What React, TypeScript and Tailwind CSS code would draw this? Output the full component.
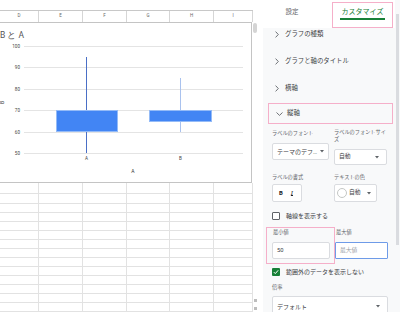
const cols = [
  { w: "w-[39px]", l: "D" },
  { w: "w-[44px]", l: "E" },
  { w: "w-[44px]", l: "F" },
  { w: "w-[43px]", l: "G" },
  { w: "w-[44px]", l: "H" },
  { w: "w-[39px]", l: "I" },
];

const rowHeights = ["h-[11px]", "h-[10px]", ...Array(12).fill("h-[9px]")];

function Chart() {
  const grid = [
    { v: "100", y: 46 },
    { v: "90", y: 67 },
    { v: "80", y: 89 },
    { v: "70", y: 110 },
    { v: "60", y: 132 },
    { v: "50", y: 153 },
  ];
  return (
    <div className="h-[161px] w-[252px] border-t border-r border-b border-[#c4c4c4] bg-white">
      <svg width="251" height="159" className="block overflow-hidden">
        <g transform="translate(0,-23)" fontFamily="Roboto, 'Liberation Sans', sans-serif">
          <text x="0" y="37.5" fontSize="8.5" fill="#555">B と A</text>
          {grid.map((g) => (
            <g key={g.v}>
              <line x1="24" x2="243" y1={g.y + 0.5} y2={g.y + 0.5} stroke="#e4e4e4" strokeWidth="1" />
              <text x="20" y={g.y + 2} fontSize="4.6" fill="#444" textAnchor="end">
                {g.v}
              </text>
            </g>
          ))}
          <text x="3.5" y="102.5" fontSize="5" fill="#333" transform="rotate(-90 3.5 102.5)" textAnchor="middle">
            B
          </text>
          <line x1="86.5" x2="86.5" y1="57" y2="153" stroke="#4a6fc6" strokeWidth="1" />
          <rect x="56.5" y="110.5" width="61" height="21" fill="#4285f4" stroke="#94bbf7" strokeWidth="1" />
          <line x1="180.5" x2="180.5" y1="78" y2="132" stroke="#a9c2ee" strokeWidth="1" />
          <rect x="149.5" y="110.5" width="62" height="11" fill="#4285f4" stroke="#94bbf7" strokeWidth="1" />
          <text x="86.5" y="160" fontSize="4.6" fill="#444" textAnchor="middle">A</text>
          <text x="180.5" y="160" fontSize="4.6" fill="#444" textAnchor="middle">B</text>
          <text x="133" y="173" fontSize="5" fill="#333" textAnchor="middle">A</text>
        </g>
      </svg>
    </div>
  );
}

function Sheet() {
  return (
    <div className="flex w-[263px] shrink-0">
      <div className="w-[253px] shrink-0 bg-white">
        <div className="h-[10px]" />
        <div className="flex h-[12px] border-t border-[#c8c8c8]">
          {cols.map((c) => (
            <div
              key={c.l}
              className={`${c.w} flex shrink-0 items-center justify-center border-r border-[#d6d6d6] text-[4.5px] leading-none text-[#666]`}
            >
              {c.l}
            </div>
          ))}
        </div>
        <Chart />
        {rowHeights.map((h, i) => (
          <div key={i} className={`flex ${h}`}>
            {cols.map((c) => (
              <div key={c.l} className={`${c.w} shrink-0 border-r border-b border-[#e2e2e2]`} />
            ))}
          </div>
        ))}
      </div>
      <div className="relative flex-1 bg-white">
        <div className="mt-[23px] h-[10px] w-[4px] rounded-[2px] bg-[#d4d4d4]" />
        <div className="absolute left-[1px] top-[299px] h-[3px] w-[3px] bg-[#bdbdbd]" />
        <div className="absolute left-[1px] top-[307px] h-[3px] w-[3px] bg-[#bdbdbd]" />
      </div>
    </div>
  );
}

function ChevronRight() {
  return (
    <svg width="4" height="7" viewBox="0 0 4 7" className="shrink-0">
      <path d="M0.6 0.6 L3.3 3.5 L0.6 6.4" fill="none" stroke="#5f6368" strokeWidth="0.9" />
    </svg>
  );
}

function Section({ label }: { label: string }) {
  return (
    <div className="flex h-[13px] items-center gap-[6px] pl-[12px]">
      <ChevronRight />
      <span className="text-[6.4px] leading-none text-[#3c4043]">{label}</span>
    </div>
  );
}

function Caret() {
  return (
    <svg width="4" height="3" viewBox="0 0 4 3" className="shrink-0">
      <path d="M0 0 L4 0 L2 2.4 Z" fill="#5f6368" />
    </svg>
  );
}

function Label({ children }: { children: React.ReactNode }) {
  return <div className="text-[5.2px] leading-[7px] text-[#5f6368]">{children}</div>;
}

function CheckRow({ checked, label }: { checked?: boolean; label: string }) {
  return (
    <div className="flex h-[8px] items-center gap-[6px] pl-[9px]">
      {checked ? (
        <div className="flex h-[8px] w-[8px] items-center justify-center rounded-[1px] bg-[#188038]">
          <svg width="6" height="6" viewBox="0 0 6 6">
            <path d="M0.8 3.1 L2.3 4.6 L5.2 1.3" fill="none" stroke="#fff" strokeWidth="1" />
          </svg>
        </div>
      ) : (
        <div className="h-[8px] w-[8px] rounded-[1px] border border-[#5f6368] bg-white" />
      )}
      <span className="text-[6px] leading-none text-[#3c4043]">{label}</span>
    </div>
  );
}

function Panel() {
  return (
    <div className="flex w-[137px] shrink-0 bg-[#f8f9fa]">
      <div className="w-[132px] shrink-0">
        <div className="flex h-[28px] bg-white">
          <div className="w-[58px] pt-[8px] text-center text-[6.5px] leading-[9px] text-[#5f6368]">設定</div>
          <div className="ml-[11px] mt-[2px] flex h-[26px] w-[61px] flex-col items-center border-[1.5px] border-[#f5afc9] pt-[5px]">
            <span className="text-[7px] leading-[9px] text-[#188038]">カスタマイズ</span>
            <div className="mt-[1px] h-[2px] w-[45px] bg-[#188038]" />
          </div>
        </div>
        <div className="flex flex-col gap-[14px]">
          <Section label="グラフの種類" />
          <Section label="グラフと軸のタイトル" />
          <Section label="横軸" />
        </div>
        <div className="ml-[5px] mt-[8px] flex h-[21px] w-[125px] items-center gap-[4px] border-[1.5px] border-[#f5afc9] pl-[7px]">
          <svg width="7" height="4" viewBox="0 0 7 4" className="shrink-0">
            <path d="M0.5 0.5 L3.5 3.4 L6.5 0.5" fill="none" stroke="#5f6368" strokeWidth="0.9" />
          </svg>
          <span className="text-[6.4px] leading-none text-[#3c4043]">縦軸</span>
        </div>

        <div className="mt-[5px] flex gap-[5px] pl-[9px]">
          <div className="flex w-[57px] flex-col">
            <div className="pt-[1px]">
              <Label>ラベルのフォント</Label>
            </div>
            <div className="mt-[6px] flex h-[17px] items-center justify-between rounded-[2px] border border-[#dadce0] bg-white pl-[4px] pr-[4px]">
              <span className="w-[41px] overflow-hidden text-ellipsis whitespace-nowrap text-[6px] leading-none text-[#3c4043]">
                テーマのデフォルト
              </span>
              <Caret />
            </div>
          </div>
          <div className="flex w-[53px] flex-col">
            <Label>
              ラベルのフォントサイ
              <br />ズ
            </Label>
            <div className="mt-[6px] flex h-[16px] items-center justify-between rounded-[2px] border border-[#dadce0] bg-white pl-[4px] pr-[7px]">
              <span className="text-[5.8px] leading-none text-[#3c4043]">自動</span>
              <Caret />
            </div>
          </div>
        </div>

        <div className="mt-[9px] flex gap-[5px] pl-[9px]">
          <div className="flex w-[57px] flex-col">
            <Label>ラベルの書式</Label>
            <div className="mt-[3px] flex h-[18px] w-[30px] items-center gap-[8px] rounded-[2px] border border-[#dadce0] bg-white pl-[6px]">
              <span className="font-['Roboto',sans-serif] text-[6px] font-bold leading-none text-[#202124]">B</span>
              <span className="font-['Liberation_Serif',serif] text-[6.5px] italic leading-none text-[#202124] underline decoration-[0.6px] underline-offset-[0px]">
                I
              </span>
            </div>
          </div>
          <div className="flex w-[53px] flex-col">
            <Label>テキストの色</Label>
            <div className="mt-[3px] flex h-[18px] w-[43px] items-center rounded-[2px] border border-[#dadce0] bg-white pl-[2px] pr-[5px]">
              <div className="h-[10px] w-[10px] rounded-full border border-[#c4c7c5] bg-white" />
              <span className="ml-[2px] text-[5.8px] leading-none text-[#3c4043]">自動</span>
              <div className="ml-auto">
                <Caret />
              </div>
            </div>
          </div>
        </div>

        <div className="mt-[10px]">
          <CheckRow label="軸線を表示する" />
        </div>

        <div className="mt-[9px] flex gap-[5px] pl-[9px]">
          <div className="relative flex w-[58px] flex-col">
            <div className="pl-[1px]">
              <Label>最小値</Label>
            </div>
            <div className="mt-[6px] flex h-[17px] items-center rounded-[2px] border border-[#dadce0] bg-white pl-[4px]">
              <span className="font-['Roboto',sans-serif] text-[5.8px] leading-none text-[#3c4043]">50</span>
            </div>
            <div className="absolute left-[-6px] top-[-2px] h-[37px] w-[69px] border-[1.5px] border-[#f5afc9]" />
          </div>
          <div className="flex w-[53px] flex-col">
            <div className="pl-[1px]">
              <Label>最大値</Label>
            </div>
            <div className="mt-[6px] flex h-[17px] items-center rounded-[1px] border border-[#6e9be8] bg-white pl-[4px]">
              <span className="text-[5.8px] leading-none text-[#9aa0a6]">最大値</span>
            </div>
          </div>
        </div>

        <div className="mt-[9px]">
          <CheckRow checked label="範囲外のデータを表示しない" />
        </div>

        <div className="mt-[8px] pl-[9px]">
          <Label>倍率</Label>
        </div>
        <div className="ml-[9px] mt-[5px] flex h-[21px] w-[116px] items-center justify-between rounded-[2px] border border-[#dadce0] bg-white pl-[4px] pr-[7px]">
          <span className="text-[6px] leading-none text-[#3c4043]">デフォルト</span>
          <Caret />
        </div>
      </div>
      <div className="w-[5px] shrink-0 pl-[1px] pt-[14px]">
        <div className="h-[231px] w-[3px] bg-[#dadce0]" />
      </div>
    </div>
  );
}

export default function App() {
  return (
    <div className="flex h-[312px] w-[400px] overflow-hidden bg-white font-['Roboto','Noto_Sans_CJK_JP',sans-serif]">
      <Sheet />
      <Panel />
    </div>
  );
}
